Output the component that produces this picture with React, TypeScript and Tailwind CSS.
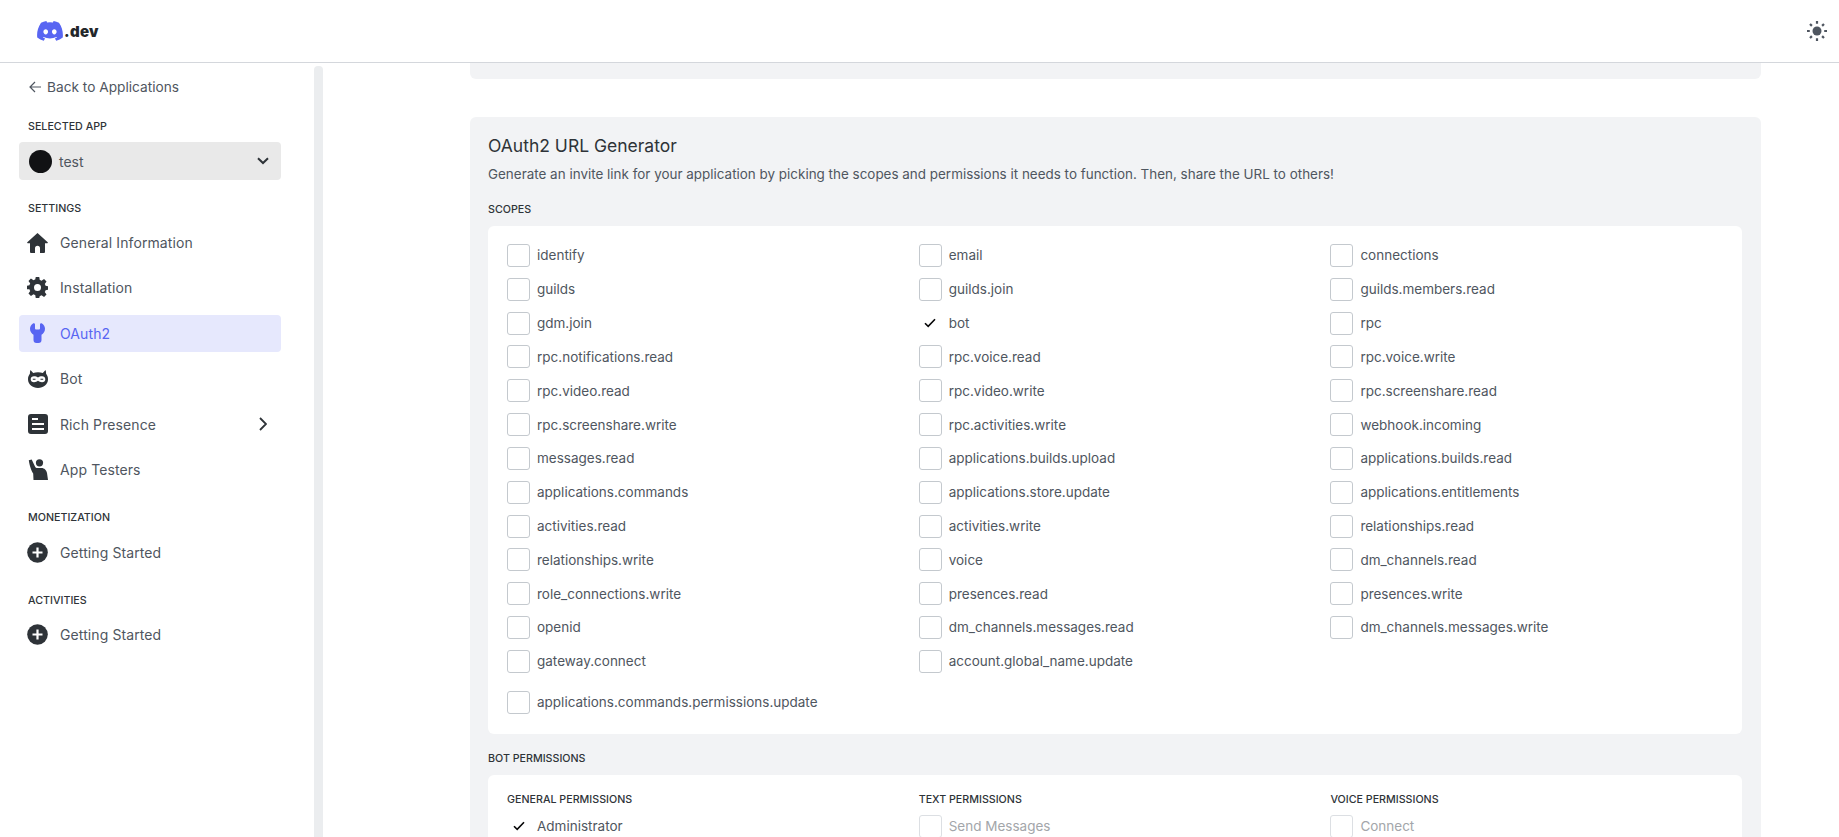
import React from "react";

const font = "font-['Inter','Noto_Sans',sans-serif]";

const scopes = [
  "identify","email","connections",
  "guilds","guilds.join","guilds.members.read",
  "gdm.join","bot","rpc",
  "rpc.notifications.read","rpc.voice.read","rpc.voice.write",
  "rpc.video.read","rpc.video.write","rpc.screenshare.read",
  "rpc.screenshare.write","rpc.activities.write","webhook.incoming",
  "messages.read","applications.builds.upload","applications.builds.read",
  "applications.commands","applications.store.update","applications.entitlements",
  "activities.read","activities.write","relationships.read",
  "relationships.write","voice","dm_channels.read",
  "role_connections.write","presences.read","presences.write",
  "openid","dm_channels.messages.read","dm_channels.messages.write",
  "gateway.connect","account.global_name.update",
];

function Check({ label, checked, disabled }: { label: string; checked?: boolean; disabled?: boolean }) {
  return (
    <div className="flex items-center h-[23px]">
      <div className={`w-[23px] h-[23px] shrink-0 rounded-[3px] flex items-center justify-center ${checked ? "" : disabled ? "border border-[#dcdfe3]" : "border border-[#c4c9ce]"}`}>
        {checked && (
          <svg width="12" height="10" viewBox="0 0 12 10" fill="none">
            <path d="M1 5.2 4.2 8.4 11 1.2" stroke="#060607" strokeWidth="1.6" />
          </svg>
        )}
      </div>
      <span className={`ml-[7px] text-[13.5px] whitespace-nowrap ${disabled ? "text-[#a3a6aa]" : "text-[#4f5660]"}`}>{label}</span>
    </div>
  );
}

function SectionLabel({ children, className = "" }: { children: React.ReactNode; className?: string }) {
  return <div className={`text-[10.7px] leading-[14px] font-medium text-[#2e3338] uppercase ${className}`}>{children}</div>;
}

function Item({ icon, label, active, right }: { icon: React.ReactNode; label: string; active?: boolean; right?: React.ReactNode }) {
  return (
    <div className={`flex items-center h-[37px] pl-[8px] pr-[12px] rounded-[4px] ${active ? "bg-[#e6e8fd] text-[#5865f2]" : "text-[#4f5660]"}`}>
      <span className={`w-[21px] h-[21px] flex items-center justify-center shrink-0 ${active ? "text-[#5865f2]" : "text-[#2e3338]"}`}>{icon}</span>
      <span className="ml-[12px] text-[14px] tracking-[0.1px] flex-1">{label}</span>
      {right}
    </div>
  );
}

const Home = () => (
  <svg width="21" height="20" viewBox="0 0 21 20" fill="currentColor">
    <path d="M10.500 0 .3 9.200c-.4.4-.1 1 .4 1H3V19a1 1 0 0 0 1 1h4v-4.800a2.500 2.500 0 0 1 5 0V20h4a1 1 0 0 0 1-1v-8.800h2.300c.5 0 .8-.6.4-1z" />
  </svg>
);
const Gear = () => (
  <svg width="21" height="21" viewBox="0 0 24 24" fill="currentColor">
    <path fillRule="evenodd" d="M10 0h4l.6 3.4c.7.2 1.4.5 2 .9l2.9-2 2.8 2.8-2 2.9c.4.6.7 1.300.9 2l3.400.6v4l-3.400.6c-.2.7-.5 1.400-.9 2l2 2.900-2.800 2.800-2.900-2c-.6.4-1.300.7-2 .9L14 24h-4l-.6-3.400c-.7-.2-1.400-.5-2-.9l-2.900 2-2.800-2.800 2-2.900c-.4-.6-.7-1.300-.9-2L-.6 14v-4l3.400-.6c.2-.7.5-1.400.9-2l-2-2.900 2.800-2.800 2.900 2c.6-.4 1.300-.7 2-.9zM12 8a4 4 0 1 0 0 8 4 4 0 0 0 0-8z" />
  </svg>
);
const Wrench = () => (
  <svg width="15" height="20" viewBox="0 0 15 20" fill="currentColor">
    <path d="M3 .4c.9-.5 2 .1 2 1.100V5.500a1 1 0 0 0 1 1h3a1 1 0 0 0 1-1V1.500c0-1 1.100-1.600 2-1.100 1.800 1 3 3 3 5.400 0 2.700-1.500 4.900-3.500 5.900V17a3 3 0 0 1-3 3H6.500a3 3 0 0 1-3-3v-5.300C1.500 10.700 0 8.500 0 5.800 0 3.400 1.200 1.400 3 .4z" />
  </svg>
);
const Bot = () => (
  <svg width="20" height="18" viewBox="0 0 20 18" fill="currentColor">
    <path fillRule="evenodd" d="M2.500 0 5.200 3C6.600 2.500 8.200 2.300 10 2.300s3.400.2 4.800.7L17.500 0c.4 1 .7 2.400.6 3.800C19.300 5.200 20 7 20 9.300c0 5.300-4.500 8.700-10 8.700S0 14.600 0 9.300C0 7 .7 5.200 1.900 3.800 1.800 2.400 2.100 1 2.500 0zM6 6.200C4 6.200 2.700 7.500 2.700 9.200S4 12.200 6 12.200c1.700 0 3-.6 4-1.400 1 .8 2.300 1.400 4 1.400 2 0 3.300-1.300 3.300-3s-1.300-3-3.300-3c-1.500 0-3 .4-4 1.200-1-.8-2.500-1.200-4-1.200z" />
    <path d="M4.800 8.700h2.700v1H4.800zM12.500 8.700h2.700v1h-2.700z" />
  </svg>
);
const Presence = () => (
  <svg width="20" height="20" viewBox="0 0 20 20" fill="currentColor">
    <path fillRule="evenodd" d="M3 0h14a3 3 0 0 1 3 3v14a3 3 0 0 1-3 3H3a3 3 0 0 1-3-3V3a3 3 0 0 1 3-3zm1 4v2h6V4zm0 5v2h12V9zm0 5v2h12v-2z" />
  </svg>
);
const Testers = () => (
  <svg width="20" height="21" viewBox="0 0 20 21" fill="currentColor">
    <circle cx="11.500" cy="3.800" r="3.600" />
    <path d="M0.800 1.200 3.700 0.400 7 7.500c.5 1 1.400 1.500 2.500 1.500h4c2.800 0 5 2.200 5.500 5l1 7H5.500l-.3-6.500C3.500 12 1.500 6.500.8 1.200z" />
  </svg>
);
const Plus = () => (
  <svg width="21" height="21" viewBox="0 0 21 21">
    <circle cx="10.500" cy="10.500" r="10.300" fill="currentColor" />
    <path d="M10.500 5.500v10M5.500 10.500h10" stroke="#fff" strokeWidth="2.200" />
  </svg>
);
const Discord = () => (
  <svg width="26" height="20" viewBox="0 0 24 18.600" fill="#5865f2">
    <path d="M20.317 1.537A19.800 19.800 0 0 0 15.432.021a.074.074 0 0 0-.079.037c-.211.375-.445.865-.608 1.250a18.300 18.300 0 0 0-5.487 0 12.600 12.600 0 0 0-.618-1.250.077.077 0 0 0-.079-.037A19.700 19.700 0 0 0 3.677 1.537a.07.07 0 0 0-.032.027C.533 6.213-.32 10.748.099 15.225a.082.082 0 0 0 .031.057 19.900 19.900 0 0 0 5.993 3.030.078.078 0 0 0 .084-.028c.462-.63.874-1.295 1.226-1.994a.076.076 0 0 0-.041-.106 13.100 13.100 0 0 1-1.872-.892.077.077 0 0 1-.008-.128c.126-.094.252-.192.372-.292a.074.074 0 0 1 .077-.01c3.928 1.793 8.180 1.793 12.062 0a.074.074 0 0 1 .078.009c.12.099.246.198.373.292a.077.077 0 0 1-.006.127 12.300 12.300 0 0 1-1.873.892.077.077 0 0 0-.041.107c.36.698.772 1.362 1.225 1.993a.076.076 0 0 0 .084.028 19.800 19.800 0 0 0 6.002-3.030.077.077 0 0 0 .032-.054c.5-5.177-.838-9.674-3.549-13.660a.061.061 0 0 0-.031-.03zM8.020 12.478c-1.183 0-2.157-1.085-2.157-2.419 0-1.333.956-2.419 2.157-2.419 1.210 0 2.176 1.095 2.157 2.419 0 1.334-.956 2.419-2.157 2.419zm7.975 0c-1.183 0-2.157-1.085-2.157-2.419 0-1.333.955-2.419 2.157-2.419 1.210 0 2.176 1.095 2.157 2.419 0 1.334-.946 2.419-2.157 2.419z" />
  </svg>
);
const Sun = () => (
  <svg width="20" height="20" viewBox="0 0 20 20" fill="#4f5660">
    <circle cx="10" cy="10" r="4.500" />
    <path d="M10 0v2.800M10 17.200V20M0 10h2.800M17.200 10H20M3 3l1.900 1.900M15.100 15.100 17 17M17 3l-1.900 1.900M4.900 15.100 3 17" stroke="#4f5660" strokeWidth="2.200" fill="none" />
  </svg>
);

export default function App() {
  return (
    <div className={`h-screen w-full overflow-hidden bg-white flex flex-col ${font}`}>
      <header className="h-[63px] shrink-0 border-b border-[#d4d7dc] flex items-center justify-between pl-[37px] pr-[12px]">
        <div className="flex items-center">
          <Discord />
          <span className="ml-[1px] mt-[3px] text-[15px] font-black tracking-[0.3px] text-[#23272a]">.dev</span>
        </div>
        <Sun />
      </header>
      <div className="flex flex-1 min-h-0">
        <aside className="w-[324px] shrink-0 relative pl-[19px] pt-[14px]">
          <div className="absolute right-[1px] top-[3px] bottom-0 w-[9px] bg-[#ebedef] rounded-t-[4px]" />
          <div className="w-[262px]">
            <div className="flex items-center h-[20px] pl-[10px] text-[13.7px] text-[#4f5660]">
              <svg width="13" height="12" viewBox="0 0 13 12" fill="none" stroke="#4f5660" strokeWidth="1.200">
                <path d="M12 6H1M6 1 1 6l5 5" />
              </svg>
              <span className="ml-[5px]">Back to Applications</span>
            </div>
            <SectionLabel className="pl-[9px] mt-[23px]">Selected App</SectionLabel>
            <div className="mt-[8px] h-[38px] rounded-[4px] bg-[#e9e9e9] flex items-center pl-[10px] pr-[12px]">
              <div className="w-[23px] h-[23px] rounded-full bg-[#111214]" />
              <span className="ml-[7px] text-[14px] text-[#4f5660] flex-1">test</span>
              <svg width="12" height="8" viewBox="0 0 12 8" fill="none" stroke="#2e3338" strokeWidth="2"><path d="M1 1.200 6 6l5-4.800" /></svg>
            </div>
            <SectionLabel className="pl-[9px] mt-[22px]">Settings</SectionLabel>
            <div className="mt-[8px] flex flex-col gap-[8.400px]">
              <Item icon={<Home />} label="General Information" />
              <Item icon={<Gear />} label="Installation" />
              <Item icon={<Wrench />} label="OAuth2" active />
              <Item icon={<Bot />} label="Bot" />
              <Item icon={<Presence />} label="Rich Presence" right={
                <svg width="8" height="14" viewBox="0 0 8 14" fill="none" stroke="#2e3338" strokeWidth="1.800" className="mr-[2px]"><path d="M1 1l6 6-6 6" /></svg>
              } />
              <Item icon={<Testers />} label="App Testers" />
            </div>
            <SectionLabel className="pl-[9px] mt-[23px]">Monetization</SectionLabel>
            <div className="mt-[9px]"><Item icon={<Plus />} label="Getting Started" /></div>
            <SectionLabel className="pl-[9px] mt-[23px]">Activities</SectionLabel>
            <div className="mt-[8px]"><Item icon={<Plus />} label="Getting Started" /></div>
          </div>
        </aside>
        <main className="flex-1 min-w-0 pl-[146px] pr-[78px]">
          <div className="h-[16px] bg-[#f2f3f5] rounded-b-[6px]" />
          <section className="mt-[38px] bg-[#f2f3f5] rounded-[6px] pl-[18px] pr-[19px] pt-[17px] pb-[40px]">
            <h2 className="text-[17.5px] leading-[24px] text-[#2e3338]">OAuth2 URL Generator</h2>
            <p className="mt-[6px] text-[13.45px] leading-[20px] text-[#4f5660]">Generate an invite link for your application by picking the scopes and permissions it needs to function. Then, share the URL to others!</p>
            <SectionLabel className="mt-[19px]">Scopes</SectionLabel>
            <div className="mt-[9px] bg-white rounded-[6px] px-[19px] pt-[18px] pb-[20px]">
              <div className="grid grid-cols-[411.7px_411.7px_1fr] gap-y-[10.840px]">
                {scopes.map((s) => (
                  <Check key={s} label={s} checked={s === "bot"} />
                ))}
              </div>
              <div className="mt-[18px]"><Check label="applications.commands.permissions.update" /></div>
            </div>
            <SectionLabel className="mt-[18px]">Bot Permissions</SectionLabel>
            <div className="mt-[9px] bg-white rounded-[6px] px-[19px] pt-[18px] pb-[19px]">
              <div className="grid grid-cols-[411.7px_411.7px_1fr]">
                <SectionLabel>General Permissions</SectionLabel>
                <SectionLabel>Text Permissions</SectionLabel>
                <SectionLabel>Voice Permissions</SectionLabel>
              </div>
              <div className="mt-[8px] grid grid-cols-[411.7px_411.7px_1fr]">
                <Check label="Administrator" checked />
                <Check label="Send Messages" disabled />
                <Check label="Connect" disabled />
              </div>
            </div>
          </section>
        </main>
      </div>
    </div>
  );
}
